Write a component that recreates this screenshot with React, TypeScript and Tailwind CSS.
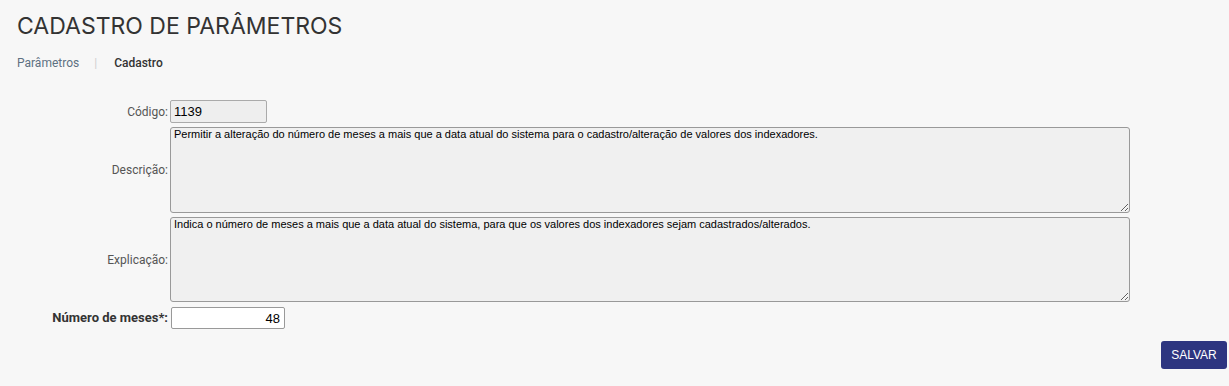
import React from 'react';

const App = () => {
  return (
    <div className="min-h-[386px] w-full bg-[#f7f7f7] font-['Roboto',sans-serif]">
      <div className="px-[17px] pt-[11px]">
        <h1 className="text-[23px] leading-[30px] text-[#333] font-['Inter',sans-serif]">
          CADASTRO DE PARÂMETROS
        </h1>
        <div className="mt-[14px] flex items-center text-[12px] leading-[16px]">
          <span className="text-[#5d7182]">Parâmetros</span>
          <span className="ml-[15px] mr-[17px] text-[#d0d0d0]">|</span>
          <span className="font-medium text-[#333]">Cadastro</span>
        </div>
      </div>

      <form className="mt-[29px] pr-[2px]">
        <div className="grid grid-cols-[170px_1fr] items-center gap-y-[4px] text-[12px] text-[#555]">
          <label className="pr-[2px] text-right">Código:</label>
          <input
            readOnly
            value="1139"
            className="h-[23px] w-[97px] rounded-[2px] border border-[#aaa] bg-[#eee] px-[3px] text-[13px] text-black font-['Liberation_Sans',Arial,sans-serif]"
          />

          <label className="pr-[2px] text-right">Descrição:</label>
          <textarea
            readOnly
            value="Permitir a alteração do número de meses a mais que a data atual do sistema para o cadastro/alteração de valores dos indexadores."
            className="h-[86px] w-[960px] rounded-[3px] border border-[#999] bg-[#f0f0f0] px-[3px] py-0 text-[11px] leading-[13px] text-black font-['Liberation_Sans',Arial,sans-serif]"
          />

          <label className="pr-[2px] text-right">Explicação:</label>
          <textarea
            readOnly
            value="Indica o número de meses a mais que a data atual do sistema, para que os valores dos indexadores sejam cadastrados/alterados."
            className="h-[85px] w-[960px] rounded-[3px] border border-[#999] bg-[#f0f0f0] px-[3px] py-0 text-[11px] leading-[13px] text-black font-['Liberation_Sans',Arial,sans-serif]"
          />

          <label className="mt-[1px] pr-[2px] text-right text-[13px] font-bold text-[#333]">Número de meses*:</label>
          <input
            defaultValue="48"
            className="mt-[1px] ml-[1px] h-[22px] w-[114px] rounded-[2px] border border-[#999] bg-white px-[4px] text-right text-[13px] text-black font-['Liberation_Sans',Arial,sans-serif]"
          />
        </div>

        <div className="mt-[12px] flex justify-end">
          <button
            type="button"
            className="h-[28px] w-[66px] rounded-[3px] bg-[#2d3580] text-[12px] font-medium text-white font-['Liberation_Sans',Arial,sans-serif]"
          >
            SALVAR
          </button>
        </div>
      </form>
    </div>
  );
};

export default App;
